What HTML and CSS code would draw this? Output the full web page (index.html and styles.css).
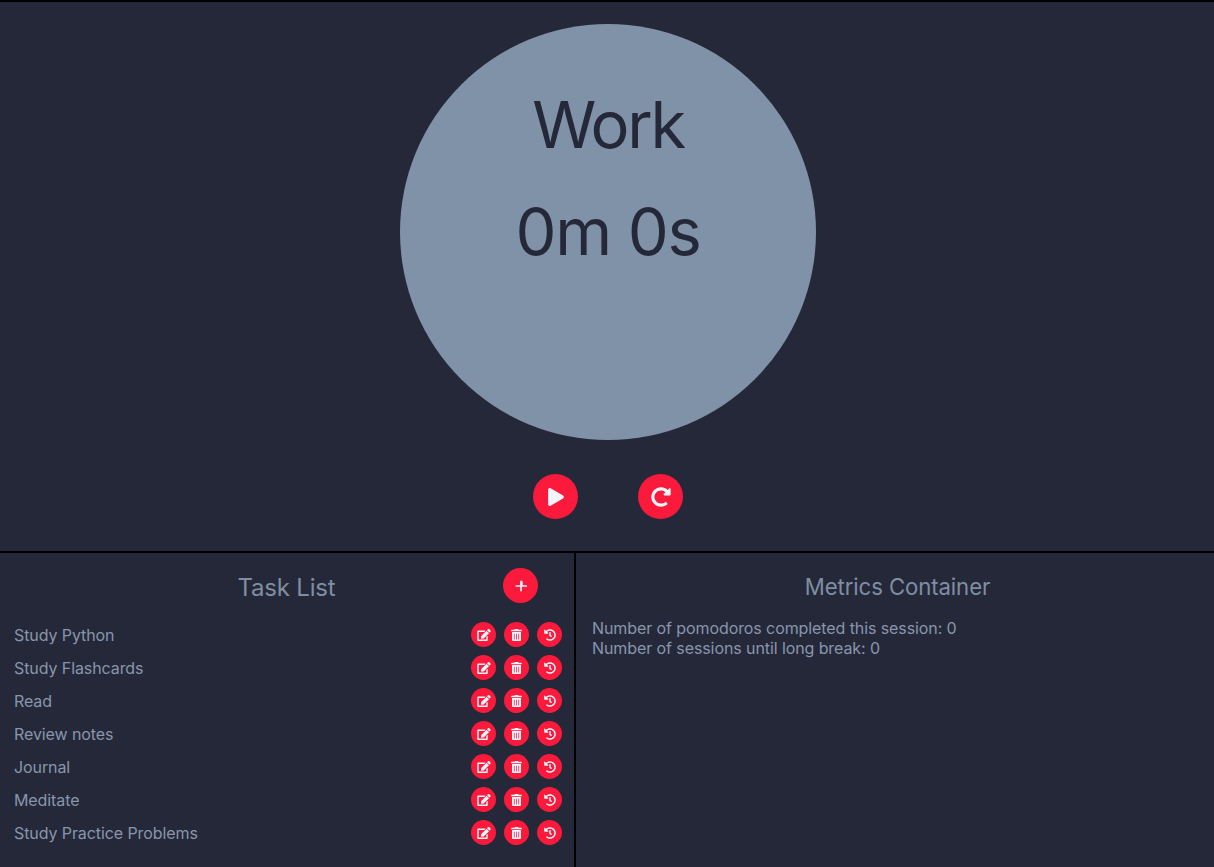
FILE: index.html
```html
<!DOCTYPE html>
<html lang="en">
<head>
<meta charset="utf-8">
<title>Pomodoro</title>
<link rel="stylesheet" href="styles.css">
</head>
<body>
<svg class="defs" aria-hidden="true">
  <symbol id="i-play" viewBox="0 0 448 512"><path d="M424.4 214.7L72.4 6.6C43.8-10.3 0 6.1 0 47.9V464c0 37.5 40.7 60.1 72.4 41.3l352-208c31.4-18.5 31.5-64.1 0-82.6z"/></symbol>
  <symbol id="i-redo" viewBox="0 0 512 512"><path d="M256.455 8c66.269.119 126.437 26.233 170.859 68.685l35.715-35.715C478.149 25.851 504 36.559 504 57.941V192c0 13.255-10.745 24-24 24H345.941c-21.382 0-32.09-25.851-16.971-40.971l41.75-41.75c-30.864-28.899-70.801-44.907-113.23-45.273-92.398-.798-170.283 73.977-169.484 169.442C88.764 348.009 162.184 424 256 424c41.127 0 79.997-14.678 110.629-41.556 4.743-4.161 11.906-3.908 16.368.553l39.662 39.662c4.872 4.872 4.631 12.815-.482 17.433C378.202 479.813 319.926 504 256 504 119.034 504 8.001 392.967 8 256.002 7.999 119.193 119.646 7.755 256.455 8z"/></symbol>
  <symbol id="i-plus" viewBox="0 0 448 512"><path d="M256 80c0-17.7-14.3-32-32-32s-32 14.3-32 32V224H48c-17.7 0-32 14.3-32 32s14.3 32 32 32H192V432c0 17.7 14.3 32 32 32s32-14.3 32-32V288H432c17.7 0 32-14.3 32-32s-14.3-32-32-32H288V80z"/></symbol>
  <symbol id="i-edit" viewBox="0 0 576 512"><path d="M402.6 83.2l90.2 90.2c3.8 3.8 3.8 10 0 13.8L274.4 405.6l-92.8 10.3c-12.4 1.4-22.9-9.1-21.5-21.5l10.3-92.8L388.8 83.2c3.8-3.8 10-3.8 13.8 0zm162-22.9l-48.8-48.8c-15.2-15.2-39.9-15.2-55.2 0l-35.4 35.4c-3.8 3.8-3.8 10 0 13.8l90.2 90.2c3.8 3.8 10 3.8 13.8 0l35.4-35.4c15.2-15.3 15.2-40 0-55.2zM384 346.2V448H64V128h229.8c3.2 0 6.2-1.3 8.5-3.5l40-40c7.6-7.6 2.2-20.5-8.5-20.5H48C21.5 64 0 85.5 0 112v352c0 26.5 21.5 48 48 48h352c26.5 0 48-21.5 48-48V306.2c0-10.7-12.9-16-20.5-8.5l-40 40c-2.2 2.3-3.5 5.3-3.5 8.5z"/></symbol>
  <symbol id="i-trash" viewBox="0 0 448 512"><path d="M32 464a48 48 0 0 0 48 48h288a48 48 0 0 0 48-48V128H32zm272-256a16 16 0 0 1 32 0v224a16 16 0 0 1-32 0zm-96 0a16 16 0 0 1 32 0v224a16 16 0 0 1-32 0zm-96 0a16 16 0 0 1 32 0v224a16 16 0 0 1-32 0zM432 32H312l-9.4-18.7A24 24 0 0 0 281.1 0H166.8a23.72 23.72 0 0 0-21.4 13.3L136 32H16A16 16 0 0 0 0 48v32a16 16 0 0 0 16 16h416a16 16 0 0 0 16-16V48a16 16 0 0 0-16-16z"/></symbol>
  <symbol id="i-hist" viewBox="0 0 512 512"><path d="M504 255.531c.253 136.64-111.18 248.372-247.82 248.468-59.015.042-113.223-20.53-155.822-54.911-11.077-8.94-11.905-25.541-1.839-35.607l11.267-11.267c8.609-8.609 22.353-9.551 31.891-1.984C173.062 425.135 212.781 440 256 440c101.705 0 184-82.311 184-184 0-101.705-82.311-184-184-184-48.814 0-93.149 18.969-126.068 49.932l50.754 50.754c10.08 10.08 2.941 27.314-11.313 27.314H24c-8.837 0-16-7.163-16-16V38.627c0-14.254 17.234-21.393 27.314-11.314l49.372 49.372C129.209 34.136 189.552 8 256 8c136.81 0 247.747 110.78 248 247.531zm-180.912 78.784l9.823-12.63c8.138-10.463 6.253-25.542-4.21-33.679L288 256.349V152c0-13.255-10.745-24-24-24h-16c-13.255 0-24 10.745-24 24v135.651l65.409 50.874c10.463 8.137 25.541 6.253 33.679-4.21z"/></symbol>
</svg>
<main class="app">
  <section class="timer">
    <div class="dial">
      <div class="dial-label">Work</div>
      <div class="dial-time">0m 0s</div>
    </div>
    <div class="controls">
      <button class="btn btn-lg" aria-label="Start"><svg class="ic-play"><use href="#i-play"/></svg></button>
      <button class="btn btn-lg" aria-label="Restart"><svg class="ic-redo"><use href="#i-redo"/></svg></button>
    </div>
  </section>
  <section class="bottom">
    <div class="tasks">
      <header class="tasks-head">
        <span></span>
        <h2 class="title tasks-title">Task List</h2>
        <button class="btn btn-add" aria-label="Add task"><svg class="ic-plus"><use href="#i-plus"/></svg></button>
      </header>
      <ul class="task-list">
        <li class="task"><span>Study Python</span><span class="actions"><button class="btn btn-sm"><svg class="ic-edit"><use href="#i-edit"/></svg></button><button class="btn btn-sm"><svg class="ic-trash"><use href="#i-trash"/></svg></button><button class="btn btn-sm"><svg class="ic-hist"><use href="#i-hist"/></svg></button></span></li>
        <li class="task"><span>Study Flashcards</span><span class="actions"><button class="btn btn-sm"><svg class="ic-edit"><use href="#i-edit"/></svg></button><button class="btn btn-sm"><svg class="ic-trash"><use href="#i-trash"/></svg></button><button class="btn btn-sm"><svg class="ic-hist"><use href="#i-hist"/></svg></button></span></li>
        <li class="task"><span>Read</span><span class="actions"><button class="btn btn-sm"><svg class="ic-edit"><use href="#i-edit"/></svg></button><button class="btn btn-sm"><svg class="ic-trash"><use href="#i-trash"/></svg></button><button class="btn btn-sm"><svg class="ic-hist"><use href="#i-hist"/></svg></button></span></li>
        <li class="task"><span>Review notes</span><span class="actions"><button class="btn btn-sm"><svg class="ic-edit"><use href="#i-edit"/></svg></button><button class="btn btn-sm"><svg class="ic-trash"><use href="#i-trash"/></svg></button><button class="btn btn-sm"><svg class="ic-hist"><use href="#i-hist"/></svg></button></span></li>
        <li class="task"><span>Journal</span><span class="actions"><button class="btn btn-sm"><svg class="ic-edit"><use href="#i-edit"/></svg></button><button class="btn btn-sm"><svg class="ic-trash"><use href="#i-trash"/></svg></button><button class="btn btn-sm"><svg class="ic-hist"><use href="#i-hist"/></svg></button></span></li>
        <li class="task"><span>Meditate</span><span class="actions"><button class="btn btn-sm"><svg class="ic-edit"><use href="#i-edit"/></svg></button><button class="btn btn-sm"><svg class="ic-trash"><use href="#i-trash"/></svg></button><button class="btn btn-sm"><svg class="ic-hist"><use href="#i-hist"/></svg></button></span></li>
        <li class="task"><span>Study Practice Problems</span><span class="actions"><button class="btn btn-sm"><svg class="ic-edit"><use href="#i-edit"/></svg></button><button class="btn btn-sm"><svg class="ic-trash"><use href="#i-trash"/></svg></button><button class="btn btn-sm"><svg class="ic-hist"><use href="#i-hist"/></svg></button></span></li>
      </ul>
    </div>
    <div class="metrics">
      <h2 class="title metrics-title">Metrics Container</h2>
      <p class="metrics-line">Number of pomodoros completed this session: 0</p>
      <p class="metrics-line">Number of sessions until long break: 0</p>
    </div>
  </section>
</main>
</body>
</html>
```
FILE: styles.css
```css
* { box-sizing: border-box; }
html, body { margin: 0; padding: 0; height: 100%; }
body { background: #252839; font-family: Inter, "Liberation Sans", sans-serif; color: #8896ac; overflow: hidden; }
.defs { width: 0; height: 0; display: block; overflow: hidden; }
.app { height: 867px; display: flex; flex-direction: column; }
.timer { height: 553px; border-top: 2px solid #000; border-bottom: 2px solid #000; display: flex; flex-direction: column; align-items: center; padding: 22px 0 0 2px; }
.dial { width: 416px; height: 416px; border-radius: 50%; background: #8092a8; color: #252839; display: flex; flex-direction: column; align-items: center; padding-top: 62px; }
.dial-label, .dial-time { font-size: 65px; line-height: 78px; letter-spacing: -2.3px; }
.dial-time { margin-top: 29px; letter-spacing: -1.3px; }
.controls { display: flex; gap: 60px; margin-top: 34px; }
.btn { border: 0; padding: 0; border-radius: 50%; background: #fb1a3c; color: #f1f5f9; display: flex; align-items: center; justify-content: center; flex: none; }
.btn svg { fill: currentColor; display: block; }
.btn-lg { width: 45px; height: 45px; }
.ic-play { width: 16px; height: 18px; }
.ic-redo { width: 20px; height: 20px; }
.bottom { flex: 1; display: flex; min-height: 0; }
.tasks { width: 576px; border-right: 2px solid #000; padding: 0 12px 0 14px; }
.tasks-head { height: 65px; margin: 0 -12px 0 -14px; padding-top: 15px; display: grid; grid-template-columns: 1fr auto 1fr; align-items: start; }
.title { margin: 0; font-size: 24px; font-weight: 400; color: #7f8ea3; line-height: 30px; letter-spacing: -0.2px; }
.tasks-title { margin: 5px 1px 0 0; }
.btn-add { width: 35px; height: 35px; justify-self: end; margin-right: 36px; }
.ic-plus { width: 12px; height: 14px; }
.task-list { list-style: none; margin: 0; padding: 0; }
.task { height: 33px; display: flex; align-items: center; justify-content: space-between; font-size: 16px; letter-spacing: -0.09px; color: #8896ac; }
.actions { display: flex; gap: 8px; }
.btn-sm { width: 25px; height: 25px; }
.ic-edit { width: 14px; height: 12px; }
.ic-trash { width: 11px; height: 12px; }
.ic-hist { width: 12px; height: 12px; }
.metrics { flex: 1; padding: 0 16px; }
.metrics-title { text-align: center; font-size: 22.2px; letter-spacing: -0.1px; padding: 19px 0 0 5px; margin-bottom: 16px; }
.metrics-line { margin: 0; font-size: 16px; line-height: 20px; letter-spacing: -0.09px; color: #8896ac; }
```
